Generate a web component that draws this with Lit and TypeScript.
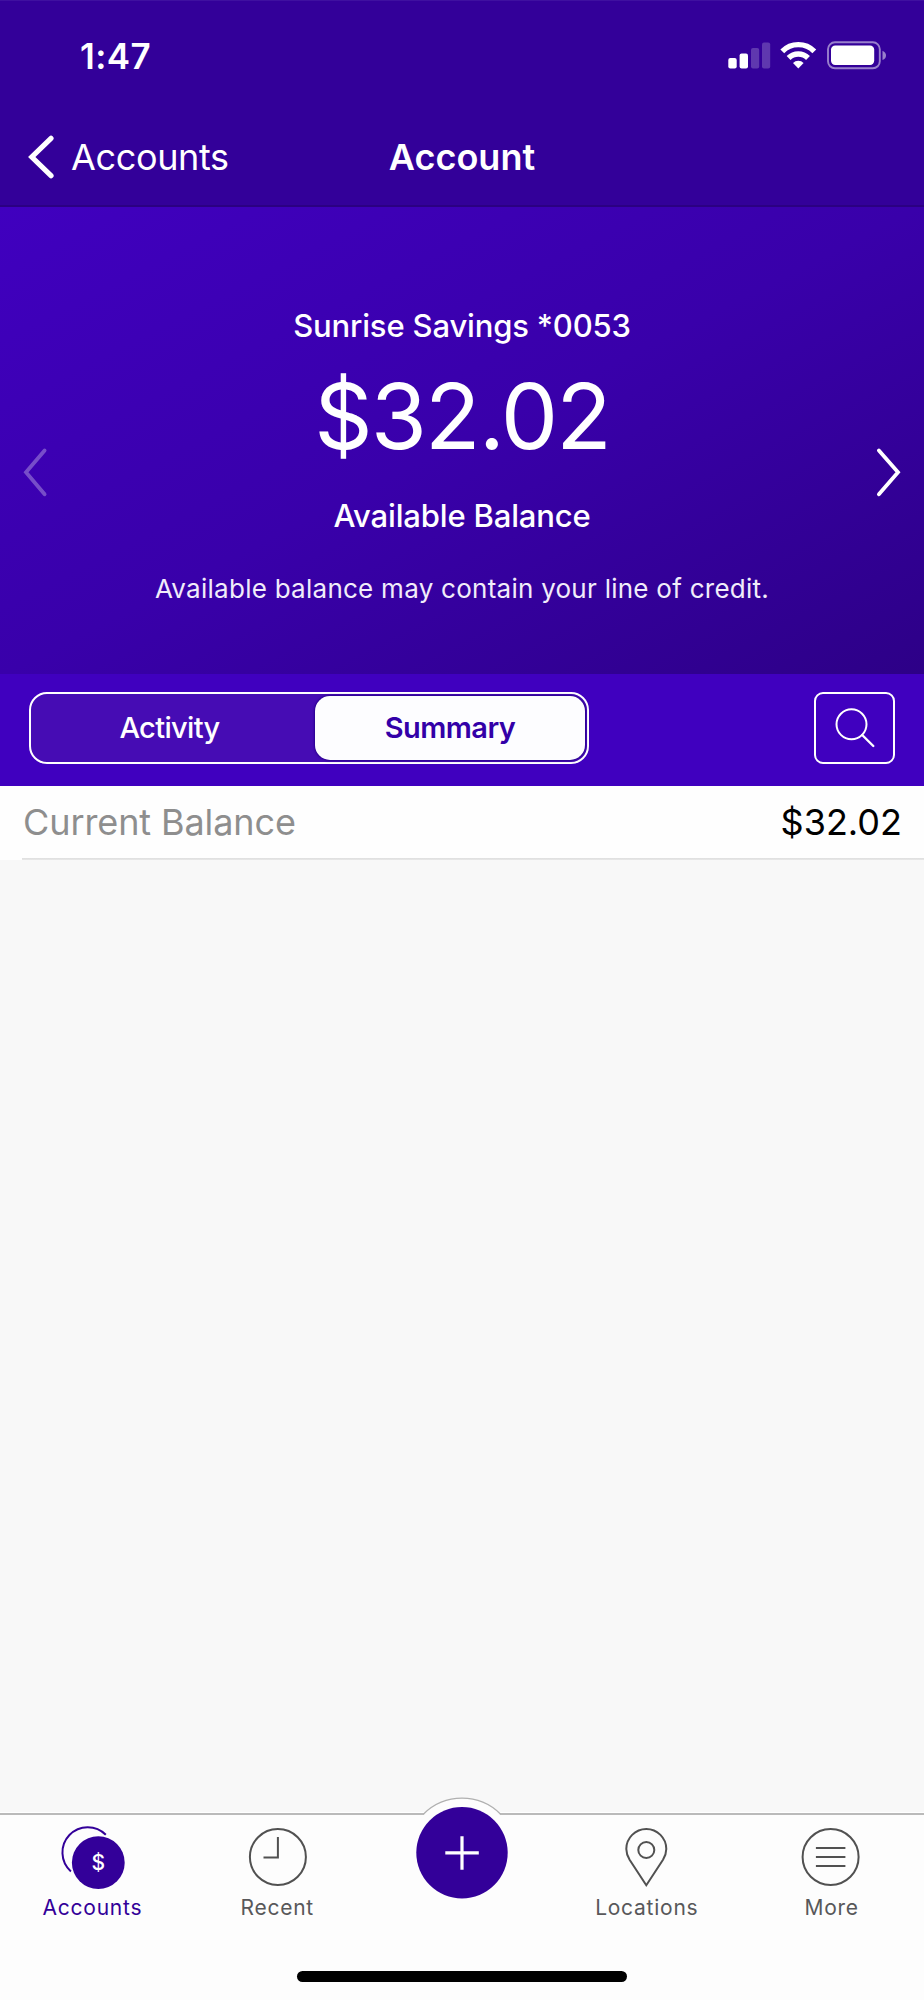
import { LitElement, html, css, svg } from "lit";
import { customElement, property } from "lit/decorators.js";

interface TabItem {
  id: string;
  label: string;
}

const TABS: TabItem[] = [
  { id: "accounts", label: "Accounts" },
  { id: "recent", label: "Recent" },
  { id: "add", label: "" },
  { id: "locations", label: "Locations" },
  { id: "more", label: "More" },
];

@customElement("status-bar")
export class StatusBar extends LitElement {
  @property() time = "";

  static styles = css`
    :host {
      display: flex;
      justify-content: space-between;
      align-items: center;
      height: 112px;
      padding: 0 38px 0 80px;
      box-sizing: border-box;
    }

    .time {
      font-size: 35px;
      font-weight: 600;
      line-height: 40px;
      letter-spacing: 0.4px;
    }

    .indicators {
      display: block;
    }
  `;

  render() {
    return html`
      <span class="time">${this.time}</span>
      <svg class="indicators" width="160" height="32" viewBox="726 40 160 32" fill="#fff">
        <rect x="728.3" y="58" width="8.4" height="10.6" rx="2" />
        <rect x="739.6" y="53.4" width="8.4" height="15.2" rx="2" />
        <rect x="751" y="48" width="8.2" height="20.6" rx="2" opacity=".22" />
        <rect x="762" y="42.6" width="8.2" height="26" rx="2" opacity=".22" />
        <g fill="none" stroke="#fff" stroke-width="5.4">
          <path d="M782.3 51.3A22.5 22.5 0 0 1 814.3 51.3" />
          <path d="M788.6 58A13.6 13.6 0 0 1 808 58" />
        </g>
        <path d="M798.3 68.6L793 62.9A7.6 7.6 0 0 1 803.6 62.9Z" />
        <rect x="828" y="42.3" width="51.8" height="26" rx="7" fill="none" stroke="#fff" stroke-width="1.9" opacity=".5" />
        <rect x="831" y="45.4" width="43.2" height="19.6" rx="4.2" />
        <path d="M882.5 50.8Q886 52.5 886 55.4Q886 58.4 882.5 60.1Z" opacity=".5" />
      </svg>
    `;
  }
}

@customElement("account-hero")
export class AccountHero extends LitElement {
  @property() name = "";
  @property() amount = "";

  static styles = css`
    :host {
      display: flex;
      justify-content: space-between;
      align-items: flex-start;
      height: 467px;
      padding: 0 22px;
      box-sizing: border-box;
      background: linear-gradient(153deg, #4000bf 0%, #3900aa 50%, #2d0087 100%);
    }

    .arrow {
      display: block;
      margin-top: 240px;
    }

    .arrow.disabled {
      opacity: 0.3;
    }

    .details {
      display: flex;
      flex-direction: column;
      align-items: center;
      padding-top: 99px;
    }

    .name,
    .caption {
      font-size: 31px;
      font-weight: 500;
      line-height: 40px;
      letter-spacing: -0.16px;
    }

    .amount {
      font-size: 91px;
      line-height: 100px;
      letter-spacing: -1.9px;
      margin-top: 20px;
    }

    .caption {
      margin-top: 30px;
    }

    .note {
      font-size: 26px;
      line-height: 34px;
      letter-spacing: 0.26px;
      margin-top: 36px;
      color: #f1ecfa;
    }
  `;

  render() {
    return html`
      <svg class="arrow disabled" width="26" height="50" viewBox="0 0 26 50">
        <path d="M22.6 3.5L4 25.3L22.6 47.2" fill="none" stroke="#fff" stroke-width="3.8" stroke-linecap="round" />
      </svg>
      <div class="details">
        <div class="name">${this.name}</div>
        <div class="amount">${this.amount}</div>
        <div class="caption">Available Balance</div>
        <div class="note">Available balance may contain your line of credit.</div>
      </div>
      <svg class="arrow" width="26" height="50" viewBox="0 0 26 50">
        <path d="M2.9 3.5L22 25.3L2.9 47.2" fill="none" stroke="#fff" stroke-width="3.8" stroke-linecap="round" />
      </svg>
    `;
  }
}

@customElement("tab-bar")
export class TabBar extends LitElement {
  @property() active = "";

  static styles = css`
    :host {
      display: flex;
      flex-direction: column;
      align-items: center;
      height: 187px;
      background: #fdfdfd;
      border-top: 2px solid #bababa;
      box-shadow: 0 -1px #fff;
      box-sizing: border-box;
    }

    .tabs {
      display: grid;
      grid-template-columns: repeat(5, 1fr);
      width: 100%;
    }

    .tab {
      display: flex;
      flex-direction: column;
      align-items: center;
      color: #58585a;
    }

    .tab.active {
      color: #330099;
    }

    .icon {
      display: block;
      margin-top: 9px;
      overflow: visible;
    }

    .label {
      font-size: 21px;
      line-height: 27px;
      letter-spacing: 0.75px;
      margin-top: 4px;
    }

    .fab {
      display: block;
      margin-top: -18px;
    }

    .home {
      width: 330px;
      height: 11px;
      border-radius: 6px;
      background: #000;
      margin-top: auto;
      margin-bottom: 18px;
    }
  `;

  private glyph(id: string) {
    switch (id) {
      case "accounts":
        return svg`
          <path d="M45.8 10.8A25.3 25.3 0 1 0 10.9 47.4" fill="none" stroke="#330099" stroke-width="2" />
          <circle cx="38.3" cy="38.7" r="26.4" fill="#330099" />
          <text x="38.3" y="46.4" font-size="21" font-weight="500" text-anchor="middle" fill="#fff">$</text>`;
      case "recent":
        return svg`
          <g fill="none" stroke="#515151" stroke-width="2">
            <circle cx="32.9" cy="33" r="28" />
            <path d="M32.9 13V33.4H18.5" />
          </g>`;
      case "locations":
        return svg`
          <g fill="none" stroke="#515151" stroke-width="2">
            <path d="M31.3 61.2L14.6 35.8C12.4 32 11.3 28.6 11.3 25A20 20 0 0 1 51.3 25C51.3 28.6 50.2 32 48 35.8Z" />
            <circle cx="31.3" cy="26" r="8" />
          </g>`;
      default:
        return svg`
          <g fill="none" stroke="#515151" stroke-width="2">
            <circle cx="30.6" cy="33" r="28" />
            <path d="M15.9 24H45.4M15.9 33H45.4M15.9 42H45.4" />
          </g>`;
    }
  }

  private renderTab(tab: TabItem) {
    if (tab.id === "add") {
      return html`
        <div class="tab">
          <svg class="fab" width="112" height="112" viewBox="0 0 112 112">
            <path d="M18.1 16.5A54.5 54.5 0 0 1 93.9 16.5V60H18.1Z" fill="#fdfdfd" />
            <path d="M17.6 17A54.5 54.5 0 0 1 94.4 17" fill="none" stroke="#b0b0b0" stroke-width="1.2" />
            <circle cx="56" cy="55.7" r="45.7" fill="#330099" />
            <path d="M56 39.2V72.7M39.3 55.9H72.8" stroke="#fff" stroke-width="3.2" />
          </svg>
        </div>
      `;
    }
    return html`
      <div class="tab ${this.active === tab.id ? "active" : ""}">
        <svg class="icon" width="64" height="66" viewBox="0 0 64 66">${this.glyph(tab.id)}</svg>
        <span class="label">${tab.label}</span>
      </div>
    `;
  }

  render() {
    return html`
      <div class="tabs">${TABS.map((tab) => this.renderTab(tab))}</div>
      <div class="home"></div>
    `;
  }
}

@customElement("app-root")
export class AppRoot extends LitElement {
  static styles = css`
    :host {
      display: flex;
      flex-direction: column;
      height: 2000px;
      background: #f8f8f8;
      color: #fff;
      font-family: Inter, "Liberation Sans", sans-serif;
    }

    .header {
      height: 207px;
      box-sizing: border-box;
      background: #330099;
      border-bottom: 2px solid #2b0082;
      box-shadow: inset 0 1px #3f10a0;
    }

    .nav {
      display: grid;
      grid-template-columns: 1fr auto 1fr;
      align-items: center;
      height: 90px;
      padding: 0 28px;
    }

    .back {
      display: flex;
      align-items: center;
      gap: 17px;
      font-size: 36px;
      line-height: 44px;
      letter-spacing: -0.35px;
    }

    .title {
      font-size: 36px;
      font-weight: 600;
      line-height: 44px;
    }

    .toolbar {
      display: flex;
      justify-content: space-between;
      align-items: flex-start;
      height: 112px;
      padding: 18px 29px 0;
      box-sizing: border-box;
      background: #4000bf;
    }

    .segmented {
      display: flex;
      width: 560px;
      height: 72px;
      padding: 2px;
      box-sizing: border-box;
      border: 2px solid #fff;
      border-radius: 18px;
      background: #460cb4;
    }

    .segment {
      display: flex;
      flex: 1;
      align-items: center;
      justify-content: center;
      padding-right: 9px;
      font-size: 29px;
      font-weight: 500;
      line-height: 36px;
      letter-spacing: -0.65px;
    }

    .segment.selected {
      flex: none;
      width: 270px;
      padding: 0;
      border-radius: 15px;
      background: #fdfdff;
      box-shadow: 0 0 2px 1px #2b0090;
      color: #3300a8;
      font-weight: 600;
      letter-spacing: -0.55px;
    }

    .search {
      width: 81px;
      height: 72px;
      box-sizing: border-box;
      border: 2px solid #fff;
      border-radius: 9px;
    }

    .row {
      display: flex;
      justify-content: space-between;
      align-items: center;
      height: 74px;
      margin-bottom: auto;
      padding: 0 22px 2px 23px;
      box-sizing: border-box;
      font-size: 36px;
      line-height: 44px;
      color: #000;
      background: linear-gradient(#dedede, #e8e8e8) 22px 100% / 100% 2px no-repeat #fefefe;
    }

    .row .term {
      color: #8e8e8e;
      letter-spacing: -0.1px;
    }
  `;

  render() {
    return html`
      <div class="header">
        <status-bar time="1:47"></status-bar>
        <div class="nav">
          <div class="back">
            <svg width="26" height="44" viewBox="0 0 26 44">
              <path d="M23 3.3L3.8 22L23 40.7" fill="none" stroke="#fff" stroke-width="5.2" stroke-linecap="round" />
            </svg>
            <span>Accounts</span>
          </div>
          <div class="title">Account</div>
        </div>
      </div>
      <account-hero name="Sunrise Savings *0053" amount="$32.02"></account-hero>
      <div class="toolbar">
        <div class="segmented">
          <div class="segment">Activity</div>
          <div class="segment selected">Summary</div>
        </div>
        <div class="search">
          <svg width="77" height="68" viewBox="0 0 77 68" fill="none" stroke="#fff" stroke-width="2">
            <circle cx="35.5" cy="30.3" r="15" />
            <path d="M46.2 41L57.3 52" stroke-width="2.4" stroke-linecap="round" />
          </svg>
        </div>
      </div>
      <div class="row">
        <span class="term">Current Balance</span>
        <span>$32.02</span>
      </div>
      <tab-bar active="accounts"></tab-bar>
    `;
  }
}
